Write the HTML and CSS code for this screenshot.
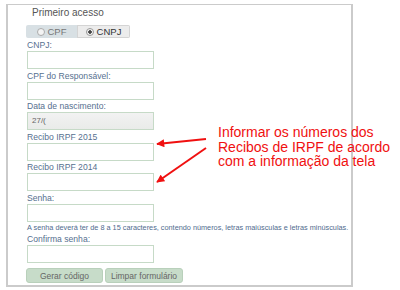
FILE: index.html
```html
<!DOCTYPE html>
<html lang="pt-BR">
<head>
    <meta charset="UTF-8">
    <title>Primeiro acesso</title>
    <link rel="stylesheet" href="styles.css">
</head>
<body>
    <div class="panel">
        <div class="title">Primeiro acesso</div>
        <div class="toggle">
            <span class="opt off"><i class="radio"></i>CPF</span>
            <span class="opt on"><i class="radio checked"></i>CNPJ</span>
        </div>
        <div class="field">
            <label>CNPJ:</label>
            <div class="box"></div>
        </div>
        <div class="field">
            <label>CPF do Responsável:</label>
            <div class="box"></div>
        </div>
        <div class="field">
            <label>Data de nascimento:</label>
            <div class="box filled">27/(</div>
        </div>
        <div class="field">
            <label>Recibo IRPF 2015</label>
            <div class="box"></div>
        </div>
        <div class="field">
            <label>Recibo IRPF 2014</label>
            <div class="box"></div>
        </div>
        <div class="field">
            <label>Senha:</label>
            <div class="box"></div>
        </div>
        <p class="hint">A senha deverá ter de 8 a 15 caracteres, contendo números, letras maiúsculas e letras minúsculas.</p>
        <div class="field">
            <label>Confirma senha:</label>
            <div class="box"></div>
        </div>
        <div class="actions">
            <button class="btn">Gerar código</button>
            <button class="btn wide">Limpar formulário</button>
        </div>
    </div>

    <svg class="arrows" width="400" height="290" viewBox="0 0 400 290">
        <defs>
            <marker id="head" viewBox="0 0 10 10" refX="9" refY="5" markerWidth="4.5" markerHeight="4" orient="auto">
                <path d="M0 0 L10 5 L0 10 Z" fill="#f01010"/>
            </marker>
        </defs>
        <line x1="206" y1="139" x2="157" y2="144" stroke="#f01010" stroke-width="2" marker-end="url(#head)"/>
        <line x1="206" y1="148" x2="157" y2="182" stroke="#f01010" stroke-width="2" marker-end="url(#head)"/>
    </svg>
    <div class="note">Informar os números dos<br>Recibos de IRPF de acordo<br>com a informação da tela</div>
</body>
</html>
```

FILE: styles.css
```css
body { margin: 0; background: #fff; font-family: "Liberation Sans", Arial, sans-serif; }
.panel { margin: 4px 0 0 6px; width: 324px; height: 280px; border: 2px solid #cbcbcb; border-top-width: 1px; padding: 0 0 0 19px; }
.title { font-size: 10px; line-height: 12px; color: #555; margin: 2px 0 0 5px; }
.toggle { display: flex; width: 104px; height: 13px; margin: 6px 0 1px -1px; border-radius: 2px; overflow: hidden; }
.opt { display: flex; align-items: center; justify-content: center; font-size: 9.5px; color: #777; }
.opt.off { width: 51px; background: #d8e0e4; }
.opt.on { width: 53px; background: #ececec; border: 1px solid #d4d4d4; box-sizing: border-box; color: #333; }
.radio { display: inline-block; width: 6px; height: 6px; border: 1px solid #aaa; border-radius: 50%; margin-right: 3px; background: #f4f4f4; }
.radio.checked { background: radial-gradient(circle, #444 0 1.5px, #f4f4f4 2px); border-color: #999; }
.field { margin-bottom: 0.5px; }
.field label { display: block; font-size: 8.6px; line-height: 12px; color: #56708f; }
.box { width: 127px; height: 18px; box-sizing: border-box; border: 1px solid #c6dac7; background: #fff; font-size: 8px; line-height: 16px; padding-left: 4px; color: #666; }
.box.filled { background: linear-gradient(#f2f2f2, #e9ebe9); }
.hint { margin: 0; font-size: 7.3px; line-height: 11px; color: #4f6b8e; white-space: nowrap; }
.actions { display: flex; gap: 2px; margin-top: 5px; margin-left: -1px; }
.btn { width: 77px; height: 15px; padding: 0; border: 1px solid #b9d0bb; border-radius: 3px; background: #c7dcc9; color: #666; font-family: inherit; font-size: 8.5px; }
.btn.wide { width: 78px; }
.arrows { position: absolute; left: 0; top: 0; }
.note { position: absolute; left: 218px; top: 125px; font-size: 14px; line-height: 14.5px; color: #f01010; white-space: nowrap; }
```
